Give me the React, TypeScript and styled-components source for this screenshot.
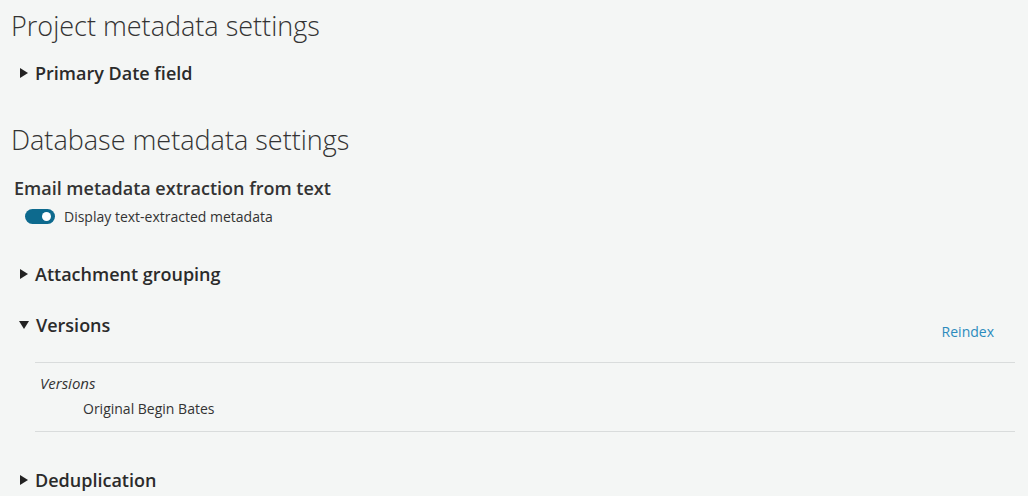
import React, { useState } from 'react'
import styled, { createGlobalStyle } from 'styled-components'

const GlobalStyle = createGlobalStyle`
  html, body {
    margin: 0;
    padding: 0;
    background: #f4f6f5;
  }
  body {
    font-family: "Open Sans", "Liberation Sans", sans-serif;
    color: #333;
  }
`

const Page = styled.div`
  padding: 8px 13px 0 9px;
`

const PageTitle = styled.h1<{ gap?: number }>`
  margin: ${ p => p.gap ?? 0 }px 0 0 2px;
  font-size: 27px;
  font-weight: 300;
  line-height: 36px;
  color: #333;
`

const SubTitle = styled.h3`
  margin: 18px 0 0 5px;
  font-size: 18px;
  font-weight: 600;
  line-height: 24px;
`

const ToggleRow = styled.label`
  display: flex;
  align-items: center;
  gap: 9px;
  height: 20px;
  margin: 6px 0 0 16px;
  font-size: 14px;
  cursor: pointer;
`

const Track = styled.span<{ on: boolean }>`
  position: relative;
  width: 30px;
  height: 15px;
  border-radius: 8px;
  background: ${ p => p.on ? '#0d6a8e' : '#b9c0c4' };
  flex-shrink: 0;
`

const Knob = styled.span<{ on: boolean }>`
  position: absolute;
  top: 3px;
  left: ${ p => p.on ? '17px' : '4px' };
  width: 9px;
  height: 9px;
  border-radius: 50%;
  background: #fff;
`

const Section = styled.section<{ gap: number }>`
  margin-top: ${ p => p.gap }px;
`

const Header = styled.div`
  display: flex;
  align-items: center;
  height: 34px;
  padding-left: 10px;
  cursor: pointer;
`

const Caret = styled.span<{ open: boolean }>`
  display: inline-block;
  width: 0;
  height: 0;
  margin-right: 7px;
  ${ p => p.open
    ? `border-left: 5px solid transparent;
       border-right: 5px solid transparent;
       border-top: 8px solid #222;`
    : `border-top: 5px solid transparent;
       border-bottom: 5px solid transparent;
       border-left: 8px solid #222;
       margin-left: 1px;` }
`

const HeaderLabel = styled.span`
  font-size: 18px;
  font-weight: 600;
  color: #2b2b2b;
  flex: 1;
`

const LinkButton = styled.a`
  align-self: flex-end;
  margin: 0 21px 1px 0;
  font-size: 14px;
  color: #2b8bbd;
  text-decoration: none;
  line-height: 18px;
`

const Body = styled.div`
  margin: 20px 0 0 26px;
  border-top: 1px solid #d9dcdc;
  border-bottom: 1px solid #d9dcdc;
  padding: 11px 0 13px 5px;
`

const FieldLabel = styled.div`
  font-size: 15px;
  font-style: italic;
  line-height: 18px;
`

const FieldValue = styled.div`
  margin: 8px 0 0 43px;
  font-size: 14px;
  line-height: 18px;
`

type CollapsibleProps = {
  title: string
  gap: number
  open?: boolean
  action?: string
  children?: React.ReactNode
}

function Collapsible({ title, gap, open = false, action, children }: CollapsibleProps) {
  const [ isOpen, setOpen ] = useState( open )
  return (
    <Section gap={ gap }>
      <Header onClick={ () => setOpen( !isOpen ) }>
        <Caret open={ isOpen } />
        <HeaderLabel>{ title }</HeaderLabel>
        { action && <LinkButton href="#" onClick={ e => e.preventDefault() }>{ action }</LinkButton> }
      </Header>
      { isOpen && children }
    </Section>
  )
}

export default function App() {
  const [ extracted, setExtracted ] = useState( true )
  return (
    <>
      <GlobalStyle />
      <Page>
        <PageTitle>Project metadata settings</PageTitle>
        <Collapsible title="Primary Date field" gap={ 12 } />

        <PageTitle gap={ 32 }>Database metadata settings</PageTitle>
        <SubTitle>Email metadata extraction from text</SubTitle>
        <ToggleRow onClick={ () => setExtracted( !extracted ) }>
          <Track on={ extracted }><Knob on={ extracted } /></Track>
          Display text-extracted metadata
        </ToggleRow>

        <Collapsible title="Attachment grouping" gap={ 31 } />
        <Collapsible title="Versions" gap={ 17 } open action="Reindex">
          <Body>
            <FieldLabel>Versions</FieldLabel>
            <FieldValue>Original Begin Bates</FieldValue>
          </Body>
        </Collapsible>
        <Collapsible title="Deduplication" gap={ 31 } />
      </Page>
    </>
  )
}
